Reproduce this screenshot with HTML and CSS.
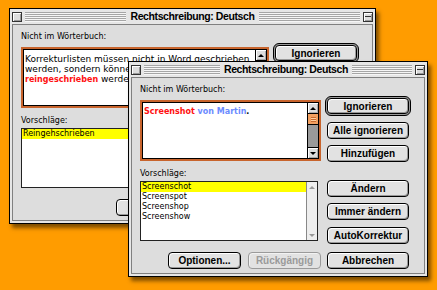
FILE: index.html
```html
<!DOCTYPE html>
<html lang="de">
<head>
<meta charset="utf-8">
<title>Rechtschreibung: Deutsch</title>
<link rel="stylesheet" href="styles.css">
</head>
<body>
<div class="win win-back">
  <div class="titlebar">
    <span class="closebox"></span>
    <div class="stripes"><span class="title">Rechtschreibung: Deutsch</span></div>
    <span class="shadebox"></span>
  </div>
  <div class="body">
    <div class="col-left">
      <div class="label">Nicht im Wörterbuch:</div>
      <div class="textbox">
        <div class="tb">
          <div class="textarea">Korrekturlisten müssen nicht in Word geschrieben<br>werden, sondern können<br><span class="err">reingeschrieben</span> werden.</div>
          <div class="sb">
            <div class="sb-arrow up"></div>
            <div class="sb-thumb"></div>
            <div class="sb-track"></div>
            <div class="sb-arrow down"></div>
          </div>
        </div>
      </div>
      <div class="label sugg">Vorschläge:</div>
      <div class="listbox">
        <div class="items">
          <div class="item sel">Reingehschrieben</div>
        </div>
        <div class="sb inactive">
          <div class="sb-arrow up"></div>
          <div class="sb-track"></div>
          <div class="sb-arrow down"></div>
        </div>
      </div>
      <div class="btnrow">
        <div class="btn small"></div>
        <div class="btn small disabled"></div>
      </div>
    </div>
    <div class="col-right">
      <div class="default"><div class="btn inner">Ignorieren</div></div>
    </div>
  </div>
</div>

<div class="win win-front">
  <div class="titlebar">
    <span class="closebox"></span>
    <div class="stripes"><span class="title">Rechtschreibung: Deutsch</span></div>
    <span class="shadebox"></span>
  </div>
  <div class="body">
    <div class="col-left">
      <div class="label">Nicht im Wörterbuch:</div>
      <div class="textbox">
        <div class="tb">
          <div class="textarea"><span class="err">Screenshot</span> <span class="name">von Martin</span>.</div>
          <div class="sb">
            <div class="sb-arrow up"></div>
            <div class="sb-thumb"></div>
            <div class="sb-track"></div>
            <div class="sb-arrow down"></div>
          </div>
        </div>
      </div>
      <div class="label sugg">Vorschläge:</div>
      <div class="listbox">
        <div class="items">
          <div class="item sel">Screenschot</div>
          <div class="item">Screenspot</div>
          <div class="item">Screenshop</div>
          <div class="item">Screenshow</div>
        </div>
        <div class="sb inactive">
          <div class="sb-arrow up"></div>
          <div class="sb-track"></div>
          <div class="sb-arrow down"></div>
        </div>
      </div>
      <div class="btnrow">
        <div class="btn small">Optionen...</div>
        <div class="btn small disabled">Rückgängig</div>
      </div>
    </div>
    <div class="col-right">
      <div class="default"><div class="btn inner">Ignorieren</div></div>
      <div class="btn r-alle">Alle ignorieren</div>
      <div class="btn r-hinzu">Hinzufügen</div>
      <div class="btn r-aendern">Ändern</div>
      <div class="btn r-immer">Immer ändern</div>
      <div class="btn r-auto">AutoKorrektur</div>
      <div class="btn r-abbr">Abbrechen</div>
    </div>
  </div>
</div>
</body>
</html>
```

FILE: styles.css
```css
* { box-sizing: border-box; margin: 0; padding: 0; }
html, body { width: 437px; height: 290px; overflow: hidden; }
body {
  background: #ff9c00;
  position: relative;
  font-family: "Liberation Sans", Arial, sans-serif;
  color: #000;
}

/* window */
.win {
  position: absolute;
  width: 300px;
  height: 216px;
  border: 1px solid #000;
  background: #e6e6e6;
  padding: 0 2px 2px;
  display: flex;
  flex-direction: column;
  box-shadow: 3px 4px 4px rgba(0, 0, 0, 0.5);
}
.win-back { left: 9px; top: 8px; width: 367px; }
.win-front { left: 128px; top: 61px; }

.titlebar {
  height: 15px;
  display: flex;
  align-items: center;
  gap: 3px;
}
.closebox, .shadebox {
  width: 10px;
  height: 10px;
  border: 1px solid #333;
  background: #ddd;
  box-shadow: inset 1px 1px 0 #fff, inset -1px -1px 0 #999;
  flex: none;
}
.shadebox {
  background: linear-gradient(#ddd 0 3px, #333 3px 4px, #ddd 4px);
}
.stripes {
  flex: 1;
  height: 10px;
  display: flex;
  justify-content: center;
  align-items: center;
  background: repeating-linear-gradient(#a6a6a6 0 1px, #f6f6f6 1px 2px);
}
.title {
  background: #e6e6e6;
  padding: 0 4px;
  height: 15px;
  line-height: 15px;
  font-size: 10.5px;
  font-weight: bold;
  letter-spacing: -0.4px;
  white-space: nowrap;
}
.win-front .title { margin-left: 16px; }

.body {
  flex: 1;
  border: 1px solid #808080;
  background: #dddddd;
  display: flex;
  gap: 4px;
  padding: 6px 13px 0 8px;
}
.col-left {
  width: 181px;
  display: flex;
  flex-direction: column;
}
.win-back .col-left { width: 248px; }
.col-right {
  width: 86px;
  display: flex;
  flex-direction: column;
  align-items: center;
}

.label {
  font-family: "DejaVu Sans", Verdana, sans-serif;
  font-size: 8px;
  line-height: 11px;
  height: 11px;
  white-space: nowrap;
}
.label.sugg { margin-top: 7px; }

/* text box with focus ring */
.textbox {
  margin-top: 5px;
  height: 61px;
  border: 2px solid #c8642d;
  display: flex;
}
.tb {
  flex: 1;
  border: 1px solid #000;
  background: #fff;
  display: flex;
}
.textarea {
  flex: 1;
  padding: 4px 1px;
  font-family: "DejaVu Sans", Verdana, sans-serif;
  font-size: 8px;
  line-height: 10px;
  white-space: nowrap;
  overflow: hidden;
}
.win-back .textarea { font-size: 9px; }
.err { color: #ff1010; font-weight: bold; font-size: 8px; }
.name { color: #6b8cff; font-weight: bold; }
.win-front .textarea { font-weight: bold; }

/* scrollbars */
.sb {
  width: 11px;
  border-left: 1px solid #000;
  display: flex;
  flex-direction: column;
  background: #999;
}
.sb-arrow {
  background: #ddd;
  box-shadow: inset 1px 1px 0 #fff, inset -1px -1px 0 #aaa;
  display: flex;
  align-items: center;
  justify-content: center;
}
.sb-arrow.up { border-bottom: 1px solid #000; height: 11px; }
.sb-arrow.down { border-top: 1px solid #000; height: 11px; }
.sb-arrow::before {
  content: "";
  border-left: 3px solid transparent;
  border-right: 3px solid transparent;
}
.sb-arrow.up::before { border-bottom: 3px solid #000; }
.sb-arrow.down::before { border-top: 3px solid #000; }
.sb-thumb {
  height: 11px;
  border-bottom: 1px solid #000;
  background:
    repeating-linear-gradient(#c86a30 0 1px, #ffd0a0 1px 2px) center / 5px 5px no-repeat,
    #f2a060;
}
.sb-track { flex: 1; background: #9a9a9a; }
.sb.inactive { background: #eee; border-left-color: #888; }
.sb.inactive .sb-track { background: #eee; }
.sb.inactive .sb-arrow { background: #eee; box-shadow: none; border-color: #eee; }
.sb.inactive .sb-arrow.up::before { border-bottom-color: #999; }
.sb.inactive .sb-arrow.down::before { border-top-color: #999; }

/* list */
.listbox {
  margin-top: 2px;
  height: 60px;
  width: 178px;
  border: 1px solid #222;
  background: #fff;
  display: flex;
}
.win-back .listbox { width: 248px; }
.items { flex: 1; }
.item {
  font-family: "DejaVu Sans", Verdana, sans-serif;
  font-size: 8px;
  line-height: 10px;
  height: 10px;
  padding-left: 1px;
  white-space: nowrap;
}
.item.sel { background: #ffff00; }

/* buttons */
.btn {
  height: 17px;
  width: 82px;
  border: 1px solid #000;
  border-radius: 4px;
  background: #e2e2e2;
  box-shadow: inset 1px 1px 0 #fff, inset -1px -1px 0 #999;
  font-size: 10px;
  font-weight: bold;
  display: flex;
  align-items: center;
  justify-content: center;
  white-space: nowrap;
  flex: none;
}
.btn.small { width: 73px; }
.btn.disabled {
  color: #9a9a9a;
  border-color: #9a9a9a;
  box-shadow: inset 1px 1px 0 #f2f2f2;
}
.btnrow {
  margin-top: 11px;
  display: flex;
  justify-content: flex-end;
  gap: 7px;
}
.default {
  margin-top: 12px;
  border: 1px solid #000;
  border-radius: 6px;
  padding: 1px;
  background: #9a9a9a;
}
.btn.inner { height: 16px; }
.r-alle { margin-top: 6px; }
.r-hinzu { margin-top: 6px; }
.r-aendern { margin-top: 18px; }
.r-immer { margin-top: 6px; }
.r-auto { margin-top: 7px; }
.r-abbr { margin-top: 8px; }
```
